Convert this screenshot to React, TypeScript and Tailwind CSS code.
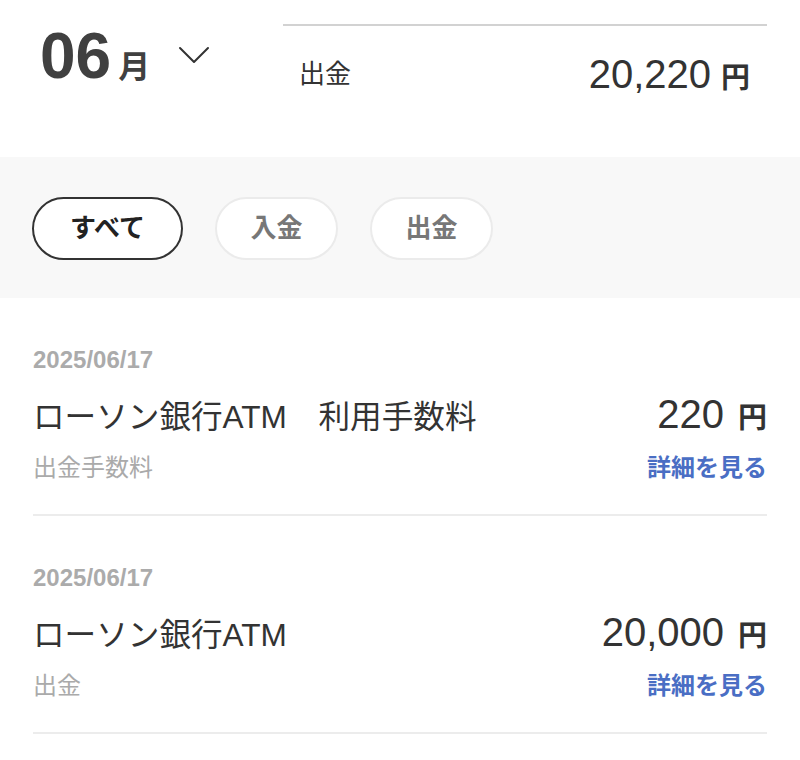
import React from 'react';

type Txn = {
  date: string;
  title: string;
  amount: string;
  kind: string;
};

const txns: Txn[] = [
  { date: '2025/06/17', title: 'ローソン銀行ATM　利用手数料', amount: '220', kind: '出金手数料' },
  { date: '2025/06/17', title: 'ローソン銀行ATM', amount: '20,000', kind: '出金' },
];

const font = { fontFamily: '"Liberation Sans", "Noto Sans CJK JP", sans-serif' };

const Chevron = () => (
  <svg width="32" height="20" viewBox="0 0 32 20" fill="none" className="text-[#333]">
    <path d="M2 3 L16 17 L30 3" stroke="currentColor" strokeWidth="2" strokeLinecap="round" strokeLinejoin="round" />
  </svg>
);

const TxnRow: React.FC<{ t: Txn }> = ({ t }) => (
  <div className="pt-[50px] pb-[34px] border-b-2 border-[#ececec]">
    <div className="text-[24px] leading-[24px] font-bold text-[#ababab]">{t.date}</div>
    <div className="mt-[22px] flex items-baseline justify-between">
      <span className="text-[31.6px] leading-none text-[#333]">{t.title}</span>
      <span className="flex items-baseline text-[#333]">
        <span className="text-[40px] leading-none">{t.amount}</span>
        <span className="ml-[14px] text-[29px] leading-none font-bold">円</span>
      </span>
    </div>
    <div className="mt-[22px] flex items-center justify-between text-[24px] leading-[24px]">
      <span className="text-[#aaaaaa]">{t.kind}</span>
      <span className="font-bold text-[#4a6ec4]">詳細を見る</span>
    </div>
  </div>
);

const Pill: React.FC<{ label: string; active?: boolean; w: string }> = ({ label, active, w }) => (
  <button
    className={`${w} h-[63px] rounded-full bg-white text-[26px] font-bold flex items-center justify-center ${
      active ? 'border-2 border-[#333] text-[#222]' : 'border-2 border-[#ebebeb] text-[#777]'
    }`}
  >
    {label}
  </button>
);

export default function App() {
  return (
    <div className="w-[800px] h-[760px] bg-white overflow-hidden" style={font}>
      <header className="h-[157px] flex pt-[24px] pr-[33px]">
        <div className="w-[283px] pl-[40px] flex items-start">
          <div className="flex items-baseline text-[#404040]">
            <span className="text-[64px] leading-none font-bold">06</span>
            <span className="ml-[7px] text-[32px] leading-none font-bold">月</span>
          </div>
          <div className="ml-[28px] mt-[21px]">
            <Chevron />
          </div>
        </div>
        <div className="flex-1 border-t-2 border-[#d2d2d2]">
          <div className="h-[96px] flex items-center justify-between pl-[16px] pr-[17px] text-[#333]">
            <span className="text-[26px]">出金</span>
            <span className="flex items-baseline">
              <span className="text-[40px] leading-none">20,220</span>
              <span className="ml-[10px] text-[29px] leading-none font-bold">円</span>
            </span>
          </div>
        </div>
      </header>

      <div className="h-[141px] bg-[#f8f8f8] px-[32px] pt-[40px] flex gap-[32px]">
        <Pill label="すべて" active w="w-[151px]" />
        <Pill label="入金" w="w-[123px]" />
        <Pill label="出金" w="w-[123px]" />
      </div>

      <div className="px-[33px]">
        {txns.map((t, i) => (
          <TxnRow key={i} t={t} />
        ))}
      </div>
    </div>
  );
}
